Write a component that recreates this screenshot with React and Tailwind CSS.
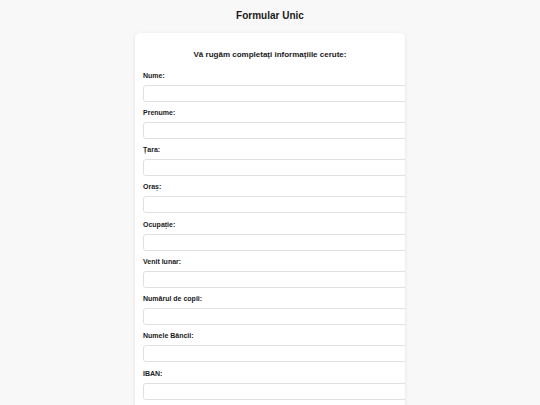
import React from "react";

const campuri = [
  "Nume:",
  "Prenume:",
  "Țara:",
  "Oraș:",
  "Ocupație:",
  "Venit lunar:",
  "Numărul de copii:",
  "Numele Băncii:",
  "IBAN:",
];

export default function App() {
  return (
    <div className="min-h-screen bg-[#f8f8f8] pt-[10px] font-['Liberation_Sans',Arial,sans-serif] text-[#1a1a1a]">
      <h1 className="text-center text-[10px] leading-[12px] font-bold mb-[11px]">
        Formular Unic
      </h1>
      <div className="mx-auto w-[270px] bg-white rounded-[5px] shadow-[0_1px_4px_rgba(0,0,0,0.08)] px-2 pt-[17px] pb-4 overflow-hidden">
        <h2 className="text-center text-[8px] leading-[10px] font-bold mb-[10.5px]">
          Vă rugăm completați informațiile cerute:
        </h2>
        {campuri.map((c) => (
          <div key={c}>
            <label className="block text-[7px] leading-[9px] font-bold mb-[5px]">
              {c}
            </label>
            <input
              type="text"
              className="block w-[calc(100%+14px)] h-[17px] border border-[#e0e0e0] rounded-[3px] bg-white mb-[6.25px]"
            />
          </div>
        ))}
      </div>
    </div>
  );
}
